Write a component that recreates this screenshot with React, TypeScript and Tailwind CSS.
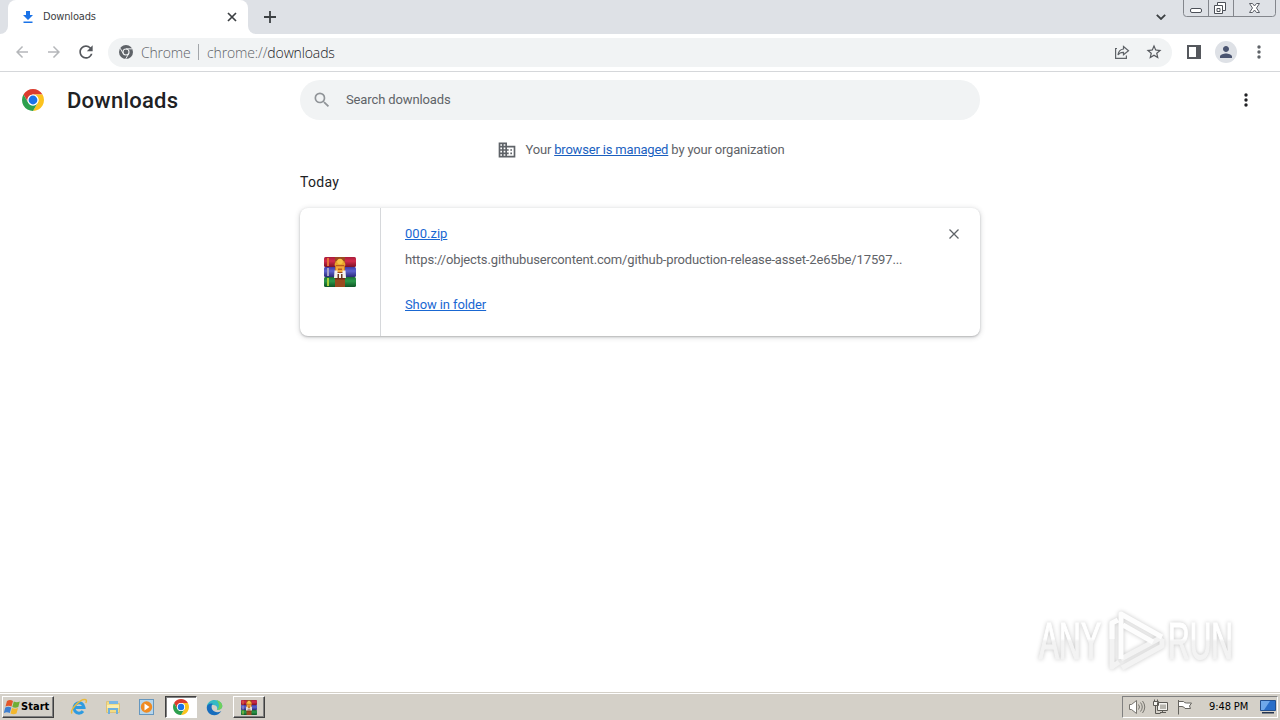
import React from 'react';

type IconProps = { className?: string };

const ChromeLogo: React.FC<IconProps> = ({ className }) => (
  <svg viewBox="2 2 44 44" className={className}>
    <path fill="#db3c2e" d="M4.95 13A22 22 0 0 1 43.05 13H24A11 11 0 0 0 14.47 29.5Z" />
    <path fill="#fcc31e" d="M43.05 13A22 22 0 0 1 24 46L33.53 29.5A11 11 0 0 0 24 13Z" />
    <path fill="#2da04e" d="M24 46A22 22 0 0 1 4.95 13L14.47 29.5A11 11 0 0 0 33.53 29.5Z" />
    <circle cx="24" cy="24" r="11" fill="#fff" />
    <circle cx="24" cy="24" r="8.8" fill="#1a73e8" />
  </svg>
);

const ChromeMono: React.FC<IconProps> = ({ className }) => (
  <svg viewBox="2 2 44 44" className={className}>
    <circle cx="24" cy="24" r="22" fill="#5f6368" />
    <circle cx="24" cy="24" r="9.5" fill="none" stroke="#f1f3f4" strokeWidth="3.5" />
    <path stroke="#f1f3f4" strokeWidth="3" d="M24 14H44M15.3 29L5.5 12M32.7 29L23 46" />
  </svg>
);

const BooksIcon: React.FC<IconProps> = ({ className }) => (
  <svg viewBox="0 0 32 30" className={className}>
    <defs>
      <linearGradient id="red" x2="0" y2="1">
        <stop offset="0" stopColor="#a81c3a" />
        <stop offset=".4" stopColor="#d42c4c" />
        <stop offset="1" stopColor="#7c1226" />
      </linearGradient>
      <linearGradient id="blue" x2="0" y2="1">
        <stop offset="0" stopColor="#3f3ba6" />
        <stop offset=".4" stopColor="#5d63d0" />
        <stop offset="1" stopColor="#2a2a78" />
      </linearGradient>
      <linearGradient id="green" x2="0" y2="1">
        <stop offset="0" stopColor="#1b6c35" />
        <stop offset=".4" stopColor="#2b9a4a" />
        <stop offset="1" stopColor="#0f5526" />
      </linearGradient>
    </defs>
    <rect x="0" y="0" width="32" height="10" rx="1.5" fill="url(#red)" />
    <rect x="0" y="10" width="32" height="10" rx="1.5" fill="url(#blue)" />
    <rect x="0" y="20" width="32" height="10" rx="1.5" fill="url(#green)" />
    <path stroke="#e8713a" strokeWidth="2" d="M4 1V9" />
    <path stroke="#a8a3c8" strokeWidth="2" d="M4 11V19" />
    <path stroke="#a9cf3a" strokeWidth="2" d="M4 21V29" />
    <path fill="#9b4a20" d="M11 0h10v30H11z" />
    <path fill="#6d2c13" d="M11 21h10v1.500H11z" />
    <path fill="#e9a52c" d="M10.500 8.500a5.500 6 0 0 1 11 0z" />
    <circle cx="16" cy="4.500" r="2.800" fill="#f6c445" />
    <path fill="#f3a83a" d="M11.500 8h9v7h-9z" />
    <path fill="#b85a1c" d="M12 8h8v1.200h-8zM14 11.500h4v1.500h-4z" />
    <path fill="#f4f1ee" d="M10.500 13.500h3v2.500h5v-2.500h3l.5 7.500H10z" />
    <path fill="#6a3a26" d="M13.500 17h1.500v4h-1.500zM17 17h1.500v4H17z" />
  </svg>
);

const Back: React.FC<IconProps> = ({ className }) => (
  <svg viewBox="0 0 24 24" className={className} fill="currentColor">
    <path d="M20 11H7.83l5.59-5.59L12 4l-8 8 8 8 1.41-1.41L7.83 13H20v-2z" />
  </svg>
);

const Dots: React.FC<IconProps> = ({ className }) => (
  <svg viewBox="0 0 4 14" className={className} fill="currentColor">
    <circle cx="2" cy="2" r="1.7" />
    <circle cx="2" cy="7" r="1.7" />
    <circle cx="2" cy="12" r="1.7" />
  </svg>
);

const TabStrip: React.FC = () => (
  <div className="flex h-[34px] bg-[#dee1e6] text-[#3c4043]">
    <div className="flex w-2 items-end bg-white">
      <div className="h-full w-full rounded-br-lg bg-[#dee1e6]" />
    </div>
    <div className="flex h-full w-60 items-center rounded-t-lg bg-white pr-[10px] pl-[14px]">
      <svg viewBox="0 0 12 12" className="h-3 w-3" fill="#1a73e8">
        <path d="M4 0h4v4h3L6 9 1 4h3zM1.500 10.500h9V12h-9z" />
      </svg>
      <span className="ml-[9px] flex-1 pt-px font-['DejaVu_Sans_Condensed','DejaVu_Sans',sans-serif] text-[11px] tracking-[-0.17px]">
        Downloads
      </span>
      <svg viewBox="0 0 12 12" className="h-3 w-3" stroke="#3c4043" strokeWidth="1.7">
        <path d="M2 2l8 8M10 2l-8 8" />
      </svg>
    </div>
    <div className="w-2 bg-white">
      <div className="h-full w-full rounded-bl-lg bg-[#dee1e6]" />
    </div>
    <div className="flex flex-1 items-center pl-2">
      <svg viewBox="0 0 12 12" className="h-3 w-3" stroke="#3c4043" strokeWidth="1.8">
        <path d="M6 0v12M0 6h12" />
      </svg>
    </div>
    <svg viewBox="0 0 10 6" className="mt-[14px] mr-[17px] h-[6px] w-[10px]" fill="none" stroke="#3c4043" strokeWidth="1.8">
      <path d="M.8.8L5 5 9.2.8" />
    </svg>
    <svg viewBox="0 0 94 17" className="mr-[3px] h-[17px] w-[94px]" fill="none" stroke="#83868c">
      <path d="M.5 0v13.500q0 3 3 3h86q3 0 3-3V0M25.500 0v16M50.500 0v16" />
      <rect x="7.500" y="8.500" width="11" height="4" rx="1.500" fill="#fff" stroke="#4c5058" />
      <path fill="#fff" stroke="#4c5058" strokeLinejoin="round" d="M34.500 2.500h8v8h-3v3h-8v-8h3zM34.500 5.500h5v5M34 8.500h3v3h-3z" />
      <path fill="#fff" stroke="#5a5e66" strokeLinejoin="round" d="M66.500 3.500h3l2 2.500 2-2.500h3L73.500 8l3 4.500h-3l-2-2.500-2 2.500h-3l3-4.500z" />
    </svg>
  </div>
);

const Toolbar: React.FC = () => (
  <div className="flex h-[38px] items-center border-b border-[#d5d7da] bg-white pb-px pl-[13px] text-[#5f6368]">
    <Back className="h-[18px] w-[18px] text-[#b5b7ba]" />
    <Back className="ml-[14px] h-[18px] w-[18px] rotate-180 text-[#b5b7ba]" />
    <svg viewBox="0 0 24 24" className="ml-[13px] h-5 w-5" fill="#55585d">
      <path d="M17.650 6.350A7.960 7.960 0 0 0 12 4c-4.420 0-7.990 3.580-7.990 8s3.570 8 7.990 8c3.730 0 6.840-2.550 7.730-6h-2.080A5.990 5.990 0 0 1 12 18c-3.310 0-6-2.690-6-6s2.690-6 6-6c1.660 0 3.140.690 4.220 1.780L13 11h7V4z" />
    </svg>
    <div className="ml-3 flex h-[29px] w-[1064px] items-center rounded-full bg-[#f1f3f4] pr-[9px] pl-[11px] font-['Open_Sans',sans-serif] text-[14px] font-light">
      <ChromeMono className="h-[14px] w-[14px]" />
      <span className="ml-2 w-[49px] whitespace-nowrap tracking-[-0.2px]">Chrome</span>
      <span className="ml-2 h-4 w-px bg-[#a3a6aa]" />
      <span className="ml-2 flex-1 tracking-[-0.13px]">
        chrome://<span className="text-[#202124]">downloads</span>
      </span>
      <svg viewBox="0 0 16 16" className="mr-[15px] h-4 w-4" fill="none" stroke="#5f6368" strokeWidth="1.200">
        <path d="M3 4.500H1.600v9.900h10.800V11.500M9.500 2.500l5 4.200-5 4V8.300C7 8.200 5.200 9 4 11c.3-3.300 2.200-5.500 5.500-6z" />
      </svg>
      <svg viewBox="0 0 24 24" className="h-[18px] w-[18px]" fill="#55585d">
        <path d="M22 9.240l-7.190-.620L12 2 9.190 8.630 2 9.240l5.460 4.730L5.820 21 12 17.270 18.180 21l-1.630-7.030zM12 15.400l-3.760 2.270 1-4.280-3.320-2.880 4.380-.380L12 6.100l1.710 4.040 4.380.380-3.320 2.880 1 4.280z" />
      </svg>
    </div>
    <svg viewBox="0 0 14 14" className="ml-[15px] h-[14px] w-[14px]" fill="#55585d">
      <path fillRule="evenodd" d="M0 0h14v14H0zM2 2v10h7V2z" />
    </svg>
    <div className="ml-[14px] flex h-[22px] w-[22px] items-center justify-center rounded-full bg-[#dee1e6]">
      <svg viewBox="4 4 16 16" className="h-3 w-3" fill="#4a5470">
        <path d="M12 12c2.210 0 4-1.790 4-4s-1.790-4-4-4-4 1.790-4 4 1.790 4 4 4zm0 2c-2.670 0-8 1.340-8 4v2h16v-2c0-2.660-5.330-4-8-4z" />
      </svg>
    </div>
    <Dots className="ml-[19.5px] h-[14px] w-1" />
  </div>
);

const Watermark: React.FC = () => (
  <svg
    viewBox="0 0 250 70"
    className="absolute top-[605px] left-[1030px] h-[70px] w-[250px] drop-shadow-[0_0_2px_rgba(0,0,0,0.22)]"
    fontFamily="Liberation Sans, sans-serif"
    fontSize="51"
  >
    <defs>
      <linearGradient id="fade" gradientUnits="userSpaceOnUse" x1="0" y1="0" x2="0" y2="70">
        <stop offset=".48" stopColor="#fff" />
        <stop offset=".52" stopColor="#f3f3f3" />
      </linearGradient>
    </defs>
    <g fill="url(#fade)" stroke="url(#fade)" strokeWidth="1.2">
      <text x="9" y="54" textLength="62" lengthAdjust="spacingAndGlyphs">ANY</text>
      <text x="138" y="54" textLength="65" lengthAdjust="spacingAndGlyphs">RUN</text>
    </g>
    <g fill="none" stroke="#fdfdfd" strokeWidth="5" strokeLinejoin="round">
      <path stroke="#f3f3f3" d="M82 16v46l7-5M92 63l40-22V34" />
      <path stroke="#f3f3f3" d="M91 54l41-22" />
      <path d="M91 54V9l41 23M82 34V18l6-3M93 20l30 17" />
    </g>
  </svg>
);

const DownloadCard: React.FC = () => (
  <div className="flex h-32 w-[680px] rounded-lg bg-white shadow-[0_1px_2px_rgba(60,64,67,0.3),0_1px_5px_1px_rgba(60,64,67,0.16)]">
    <div className="flex w-[81px] items-center justify-center border-r border-[#d6d8db]">
      <BooksIcon className="h-[30px] w-8" />
    </div>
    <div className="flex flex-1 flex-col items-start pt-4 pl-6 text-[13px] leading-5">
      <a className="tracking-[0.02px] text-[#1967d2] underline">000.zip</a>
      <span className="mt-[6px] tracking-[-0.145px] whitespace-nowrap text-[#5f6368]">
        https://objects.githubusercontent.com/github-production-release-asset-2e65be/17597...
      </span>
      <a className="mt-[25px] tracking-[-0.1px] text-[#1967d2] underline">Show in folder</a>
    </div>
    <svg viewBox="0 0 10 10" className="mt-[21px] mr-[21px] h-[10px] w-[10px]" stroke="#5f6368" strokeWidth="1.300">
      <path d="M.5.5l9 9M9.500.5l-9 9" />
    </svg>
  </div>
);

const Taskbar: React.FC = () => (
  <div className="flex h-7 items-start border-t border-[#d4d0c8] bg-[#d4d0c8] pr-[2px] pl-[2px] shadow-[inset_0_1px_0_#fff]">
    <div className="mt-[3px] flex h-[22px] w-[52px] items-center border border-t-white border-r-[#404040] border-b-[#404040] border-l-white pl-px shadow-[inset_-1px_-1px_0_#808080]">
      <svg viewBox="0 0 17 16" className="h-4 w-[17px]">
        <path fill="#e4572a" d="M3 2q3-2 6 0L7.500 7.500q-3-1.500-6 0z" />
        <path fill="#6fae35" d="M9.800 2.500q3 1.500 6 0L14.300 8q-3 1.500-6 0z" />
        <path fill="#3e7fd0" d="M1.300 8.500q3-1.500 6 0L5.800 14q-3-1.500-6 0z" />
        <path fill="#f3b72c" d="M8 9q3 1.500 6 0l-1.500 5.500q-3 1.500-6 0z" />
      </svg>
      <span className="pt-px font-['DejaVu_Sans_Condensed','DejaVu_Sans',sans-serif] text-[11px] font-bold tracking-[0.05px] text-black">
        Start
      </span>
    </div>
    <svg viewBox="0 0 18 18" className="mt-[5px] ml-4 h-[18px] w-[18px]" fill="none">
      <path stroke="#2e9be0" strokeWidth="3" d="M4.500 9.500H14A5 5.300 0 1 0 13 13.200" />
      <path stroke="#e9b93a" strokeWidth="1.500" d="M2 15.500C-.5 12 10 1 15 1.500c2 .2 1.500 2 .8 3.500" />
    </svg>
    <svg viewBox="0 0 18 18" className="mt-[5px] ml-4 h-[18px] w-[18px]">
      <path fill="#f3dc83" stroke="#dcc27c" d="M2.500 3.500h4l1 2h8v9h-13z" />
      <path fill="#79b6e4" d="M5 3h9v3H5z" />
      <path fill="#faedad" d="M3 7h12v3H3z" />
      <path fill="none" stroke="#6fb0dc" strokeWidth="2" d="M5 16v-5h8v5" />
    </svg>
    <svg viewBox="0 0 18 18" className="mt-[5px] ml-4 h-[18px] w-[18px]">
      <rect x="1.500" y="1.500" width="14" height="15" fill="#b6d6ec" stroke="#6597bf" />
      <circle cx="8.500" cy="9" r="5.700" fill="#ef8b22" />
      <path fill="#fff" d="M6.500 5.500l5 3.500-5 3.500z" />
    </svg>
    <div className="mt-[3px] ml-[9px] flex h-[22px] w-8 items-center justify-center border border-t-[#404040] border-r-white border-b-white border-l-[#404040] bg-white shadow-[inset_1px_1px_0_#808080]">
      <ChromeLogo className="h-4 w-4" />
    </div>
    <svg viewBox="0 0 18 18" className="mt-[6px] ml-[9px] h-[17px] w-[17px]">
      <path fill="#35b9c5" d="M.8 8C1.500 3.500 5 1 9 1c5 0 8.300 3.300 8.300 6.500 0 3-2.800 4.500-5.800 3.800 1.200-2-.3-5-3.500-5C5 6.300 2.500 7 .8 8z" />
      <path fill="#6fd05c" d="M11 1.300c4 .8 6.300 3.500 6.300 6.200 0 3-2.800 4.500-5.800 3.800C15 9 14 4 11 1.300z" />
      <path fill="#176dbd" d="M.8 9c0-3 3-5 6.500-4C5 7 5 13 12 14q2 0 4.300-1.300C12 20 .8 18 .8 9z" />
    </svg>
    <div className="mt-[3px] ml-[10px] flex h-[22px] w-8 items-center justify-center border border-t-white border-r-[#404040] border-b-[#404040] border-l-white shadow-[inset_-1px_-1px_0_#808080]">
      <BooksIcon className="h-[15px] w-4" />
    </div>
    <div className="mt-[3px] ml-auto flex h-[22px] w-[156px] items-center border border-t-[#808080] border-r-white border-b-white border-l-[#808080] pl-[5px]">
      <svg viewBox="0 0 18 16" className="h-4 w-[18px]" fill="none" stroke="#77756f">
        <path fill="#fff" d="M1.500 5.500h2l5-4v13l-5-4h-2z" />
        <path d="M10.500 5.500q2 2.500 0 5M12.500 3.500q3.500 4.500 0 9M14.500 2q4.500 6 0 12" />
      </svg>
      <svg viewBox="0 0 17 16" className="ml-[6px] h-4 w-[17px]" stroke="#5c5a55">
        <path fill="#f5f4f0" d="M5.500 3.500h10v8h-10zM1.500 2.500h5v4h-5zM8 13.500h6M10.500 11.500v2" />
        <path fill="none" d="M2.500.5v2M5.500.5v2M3.500 6.500v8h5" />
        <path stroke="none" fill="#b7b5ae" d="M8 5.500h6v4.500H8z" />
      </svg>
      <svg viewBox="0 0 17 16" className="ml-[7px] h-4 w-[17px]" fill="#fff" stroke="#66645f">
        <path d="M2.500 1v14.500M2.500 2.500h5q1 1.500 3 1.500h5l-2 3 1 2.500H9q-1-2-3-2H2.500z" />
      </svg>
      <span className="ml-4 w-[41px] pt-px font-['DejaVu_Sans_Condensed','DejaVu_Sans',sans-serif] text-[11px] tracking-[-0.1px] whitespace-nowrap text-black">
        9:48 PM
      </span>
      <svg viewBox="0 0 16 14" className="ml-[10px] h-[14px] w-4">
        <path fill="#2a6fc9" stroke="#23508f" d="M.5.5h15v10H.5z" />
        <path fill="#6fa9ea" d="M1 1h9L4 10H1z" />
        <path fill="#24344f" d="M2 12h12v1.500H2z" />
      </svg>
    </div>
  </div>
);

export default function App() {
  return (
    <div className="relative flex h-[720px] w-[1280px] flex-col overflow-hidden bg-white font-[Roboto,sans-serif]">
      <TabStrip />
      <Toolbar />
      <header className="flex h-14 items-center pl-[22px]">
        <ChromeLogo className="h-[22px] w-[22px]" />
        <h1 className="ml-[23px] w-[233px] text-[22px] font-medium tracking-[0.25px] text-[#202124]">Downloads</h1>
        <div className="flex h-10 w-[680px] items-center rounded-full bg-[#f1f3f4] pl-3 text-[#5f6368]">
          <svg viewBox="0 0 24 24" className="h-5 w-5" fill="#909498">
            <path d="M15.500 14h-.790l-.280-.270A6.470 6.470 0 0 0 16 9.500 6.500 6.500 0 1 0 9.500 16c1.610 0 3.090-.590 4.230-1.570l.270.280v.790l5 4.990L20.490 19zm-6 0C7.010 14 5 11.990 5 9.500S7.010 5 9.500 5 14 7.010 14 9.500 11.990 14 9.500 14z" />
          </svg>
          <span className="ml-[14px] text-[13px] tracking-[-0.12px]">Search downloads</span>
        </div>
        <Dots className="mr-8 ml-auto h-[14px] w-1 text-[#202124]" />
      </header>
      <main className="mx-auto flex w-[680px] flex-1 flex-col">
        <div className="flex h-[42px] items-center justify-center pt-[2px] text-[13px] text-[#5f6368]">
          <svg viewBox="0 0 24 24" className="mr-2 ml-[2px] h-5 w-5" fill="#5f6368">
            <path d="M12 7V3H2v18h20V7H12zM6 19H4v-2h2v2zm0-4H4v-2h2v2zm0-4H4V9h2v2zm0-4H4V5h2v2zm4 12H8v-2h2v2zm0-4H8v-2h2v2zm0-4H8V9h2v2zm0-4H8V5h2v2zm10 12h-8v-2h2v-2h-2v-2h2v-2h-2V9h8v10zm-2-8h-2v2h2v-2zm0 4h-2v2h2v-2z" />
          </svg>
          <span className="tracking-[-0.18px]">
            Your <a className="text-[#1a5fbf] underline">browser is managed</a> by your organization
          </span>
        </div>
        <h2 className="mt-[2px] mb-[16px] text-[14px] leading-5 tracking-[0.3px] text-[#202124]">Today</h2>
        <DownloadCard />
      </main>
      <Taskbar />
      <Watermark />
    </div>
  );
}
